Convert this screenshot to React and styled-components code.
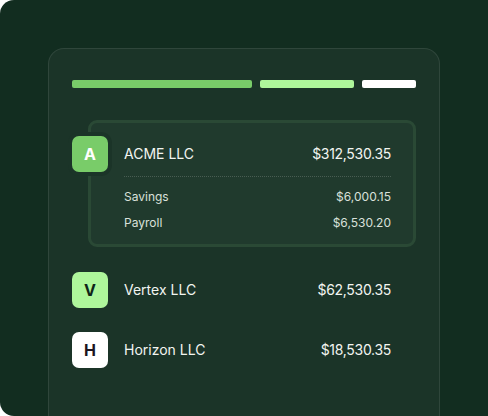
import React from "react";
import styled, { createGlobalStyle } from "styled-components";

const GlobalStyle = createGlobalStyle`
  html, body {
    margin: 0;
    padding: 0;
    background: #ffffff;
  }
  body {
    font-family: Inter, "Noto Sans", sans-serif;
    -webkit-font-smoothing: antialiased;
  }
`;

const accounts = [
  {
    letter: "A",
    name: "ACME LLC",
    amount: "$312,530.35",
    tone: "green",
    subs: [
      { label: "Savings", amount: "$6,000.15" },
      { label: "Payroll", amount: "$6,530.20" },
    ],
  },
  { letter: "V", name: "Vertex LLC", amount: "$62,530.35", tone: "mint" },
  { letter: "H", name: "Horizon LLC", amount: "$18,530.35", tone: "white" },
];

const tones = {
  green: { bg: "#79cc69", fg: "#ffffff" },
  mint: { bg: "#aef69b", fg: "#0f2418" },
  white: { bg: "#ffffff", fg: "#1c1420" },
};

export default function App() {
  return (
    <>
      <GlobalStyle />
      <Page>
        <Card>
          <Bars>
            <Bar $w={180} $color="#79cc69" />
            <Bar $w={94} $color="#aef69b" />
            <Bar $w={54} $color="#ffffff" />
          </Bars>
          <List>
            {accounts.map((acc) =>
              acc.subs ? (
                <Panel key={acc.name}>
                  <Row $inPanel>
                    <Avatar $tone={acc.tone} $halo>
                      {acc.letter}
                    </Avatar>
                    <Name>{acc.name}</Name>
                    <Amount>{acc.amount}</Amount>
                  </Row>
                  <Divider />
                  <Subs>
                    {acc.subs.map((s) => (
                      <SubRow key={s.label}>
                        <span>{s.label}</span>
                        <span>{s.amount}</span>
                      </SubRow>
                    ))}
                  </Subs>
                </Panel>
              ) : (
                <Row key={acc.name}>
                  <Avatar $tone={acc.tone}>{acc.letter}</Avatar>
                  <Name>{acc.name}</Name>
                  <Amount>{acc.amount}</Amount>
                </Row>
              )
            )}
          </List>
        </Card>
      </Page>
    </>
  );
}

const Page = styled.div`
  width: 488px;
  height: 416px;
  box-sizing: border-box;
  background: #122d20;
  border-radius: 14px 0 0 14px;
  padding: 48px 48px 0 48px;
  overflow: hidden;
`;

const Card = styled.div`
  height: 100%;
  box-sizing: border-box;
  background: #1b3428;
  border: 1px solid rgba(255, 255, 255, 0.09);
  border-bottom: none;
  border-radius: 16px 16px 0 0;
  padding: 31px 23px 0 23px;
`;

const Bars = styled.div`
  display: flex;
  gap: 8px;
`;

const Bar = styled.div`
  width: ${(p) => p.$w}px;
  height: 8px;
  border-radius: 2px;
  background: ${(p) => p.$color};
`;

const List = styled.div`
  margin-top: 32px;
  display: flex;
  flex-direction: column;
  gap: 24px;
`;

const Panel = styled.div`
  margin-left: 16px;
  margin-bottom: 1px;
  border: 3px solid #2a4935;
  border-radius: 9px;
  background: #203a2d;
  padding: 13px 22px 12px 0;
`;

const Row = styled.div`
  display: flex;
  align-items: center;
  height: 36px;
  padding-right: ${(p) => (p.$inPanel ? 0 : 25)}px;
  margin-left: ${(p) => (p.$inPanel ? -19 : 0)}px;
  color: #f2f5f1;
  font-size: 14px;
  line-height: 18px;
`;

const Avatar = styled.div`
  width: 36px;
  height: 36px;
  flex: none;
  border-radius: 7px;
  display: flex;
  align-items: center;
  justify-content: center;
  font-size: 16px;
  font-weight: 700;
  background: ${(p) => tones[p.$tone].bg};
  color: ${(p) => tones[p.$tone].fg};
  box-shadow: ${(p) => (p.$halo ? "0 0 0 4px #1b3428" : "none")};
`;

const Name = styled.div`
  margin-left: 16px;
  flex: 1;
  margin-top: -1px;
`;

const Amount = styled.div`
  letter-spacing: -0.3px;
  margin-top: -1px;
`;

const Divider = styled.div`
  margin: 4px 0 0 33px;
  border-top: 1px dotted rgba(255, 255, 255, 0.18);
`;

const Subs = styled.div`
  margin-top: 11px;
  padding-left: 33px;
  display: flex;
  flex-direction: column;
  gap: 8px;
`;

const SubRow = styled.div`
  display: flex;
  justify-content: space-between;
  font-size: 12px;
  line-height: 18px;
  color: #d9e0da;
`;
